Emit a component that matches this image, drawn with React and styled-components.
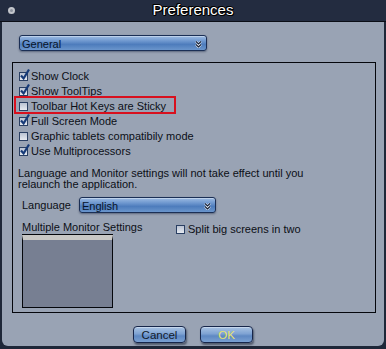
import React from "react";
import styled, { createGlobalStyle } from "styled-components";

const Global = createGlobalStyle`
  html, body { margin: 0; padding: 0; background: #1c2434; }
  body { width: 386px; height: 349px; overflow: hidden; }
  * { box-sizing: border-box; }
`;

const Window = styled.div`
  width: 386px;
  height: 349px;
  display: flex;
  flex-direction: column;
  background: #1e2738;
  padding: 0 2px 3px 2px;
  font-family: "Liberation Sans", Arial, sans-serif;
  font-size: 11px;
  color: #0c0f16;
`;

const TitleBar = styled.div`
  height: 22px;
  flex: none;
  position: relative;
  display: flex;
  align-items: center;
  justify-content: center;
  background: #232c40;
  border-bottom: 1px solid #0b0e16;
  margin: 0 -2px;
`;

const Title = styled.div`
  color: #fff;
  font-family: "Liberation Sans", Arial, sans-serif;
  font-size: 15px;
  line-height: 1;
  margin-top: -2px;
  text-shadow: -1px 0 #000, 1px 0 #000, 0 -1px #000, 0 1px #000, 1px 1px #000, -1px -1px #000;
`;

const CloseDot = styled.span`
  position: absolute;
  left: 8px;
  top: 7px;
  width: 7px;
  height: 7px;
  border-radius: 50%;
  background: #8d939e;
  border: 2px solid #c3c6cc;
`;

const Body = styled.div`
  flex: 1;
  background: #99a3b4;
  border-radius: 0 0 6px 6px;
  display: flex;
  flex-direction: column;
  padding: 13px 9px 0 10px;
`;

const Select = styled.div`
  width: ${(p) => p.$w}px;
  height: 16px;
  border: 1px solid #1b2f55;
  border-radius: 3px;
  background: linear-gradient(#9dbbe2 0%, #6f98cf 35%, #4d7cbc 60%, #6a95cc 100%);
  box-shadow: 0 1px 2px rgba(20, 30, 60, 0.45), inset 0 1px 0 rgba(255,255,255,0.35);
  display: flex;
  align-items: center;
  justify-content: space-between;
  padding: 1px 4px 0 2px;
  font-size: 11px;
  color: #07142a;
  flex: none;
`;

const Chevron = () => (
  <svg width="7" height="8" viewBox="0 0 7 8">
    <path d="M1 1.5 L3.5 4 L6 1.5 M1 4.5 L3.5 7 L6 4.5" fill="none" stroke="#f2f5fa" strokeWidth="2.2" />
    <path d="M1 1.5 L3.5 4 L6 1.5 M1 4.5 L3.5 7 L6 4.5" fill="none" stroke="#0d1a33" strokeWidth="1.1" />
  </svg>
);

const TopSelectWrap = styled.div`
  padding-left: 7px;
`;

const Group = styled.div`
  margin-top: 11px;
  width: 364px;
  height: 251px;
  border: 1px solid #05070c;
  display: flex;
  flex-direction: column;
  padding: 5px 0 0 5px;
`;

const CheckList = styled.div`
  display: flex;
  flex-direction: column;
`;

const Row = styled.label`
  position: relative;
  height: 15px;
  display: flex;
  align-items: center;
  gap: 3px;
  padding-left: 1px;
`;

const Highlight = styled.span`
  position: absolute;
  left: -4px;
  top: -2px;
  width: 162px;
  height: 18px;
  border: 2px solid #d8101e;
  pointer-events: none;
`;

const Box = styled.span`
  position: relative;
  width: 9px;
  height: 9px;
  flex: none;
  border: 1px solid #2a3f63;
  background: linear-gradient(#b9c2d2, #e6eaf1);
  margin-top: 1px;
`;

const Tick = styled.svg`
  position: absolute;
  left: 0px;
  top: -4px;
  overflow: visible;
`;

const Check = ({ checked }) => (
  <Box>
    {checked && (
      <Tick width="10" height="11" viewBox="0 0 10 11">
        <path d="M1 6.5 L3.6 9.5 L9 0.5" fill="none" stroke="#163a78" strokeWidth="2.2" />
      </Tick>
    )}
  </Box>
);

const Note = styled.div`
  margin-top: 10px;
  line-height: 11px;
`;

const LangRow = styled.div`
  margin-top: 7px;
  padding-left: 4px;
  display: flex;
  align-items: center;
  gap: 8px;
`;

const Monitors = styled.div`
  margin-top: 8px;
  padding-left: 4px;
  display: flex;
`;

const MonitorCol = styled.div`
  width: 153px;
  display: flex;
  flex-direction: column;
`;

const MonitorLabel = styled.span`
  line-height: 13px;
`;

const MonitorBox = styled.div`
  width: 91px;
  height: 73px;
  border: 1px solid #05070c;
  background: #777f92;
  border-top: 5px solid #c8c7c5;
  box-shadow: 0 -1px 0 #05070c;
  margin-top: 1px;
`;

const SplitRow = styled(Row)`
  margin-top: 0;
`;

const Buttons = styled.div`
  margin-top: 13px;
  display: flex;
  justify-content: center;
  gap: 14px;
  padding-right: 1px;
`;

const Button = styled.button`
  width: 53px;
  height: 17px;
  border: 1px solid #17264a;
  border-radius: 4px;
  background: linear-gradient(#a9c3e3 0%, #7fa3d3 45%, #5e88c2 60%, #79a0d2 100%);
  box-shadow: 1px 2px 2px rgba(10, 20, 40, 0.5), inset 0 1px 0 rgba(255,255,255,0.35);
  font-family: "Liberation Sans", Arial, sans-serif;
  font-size: 11.5px;
  color: ${(p) => (p.$primary ? "#e8e46e" : "#121a2a")};
  padding: 1px 0 0;
`;

const items = [
  ["Show Clock", true],
  ["Show ToolTips", true],
  ["Toolbar Hot Keys are Sticky", false, true],
  ["Full Screen Mode", true],
  ["Graphic tablets compatibily mode", false],
  ["Use Multiprocessors", true],
];

export default function App() {
  return (
    <>
      <Global />
      <Window>
        <TitleBar>
          <CloseDot />
          <Title>Preferences</Title>
        </TitleBar>
        <Body>
          <TopSelectWrap>
            <Select $w={188}>
              <span>General</span>
              <Chevron />
            </Select>
          </TopSelectWrap>
          <Group>
            <CheckList>
              {items.map(([t, c, hl]) => (
                <Row key={t}>
                  {hl && <Highlight />}
                  <Check checked={c} />
                  <span>{t}</span>
                </Row>
              ))}
            </CheckList>
            <Note>
              Language and Monitor settings will not take effect until you
              <br />
              relaunch the application.
            </Note>
            <LangRow>
              <span>Language</span>
              <Select $w={137}>
                <span>English</span>
                <Chevron />
              </Select>
            </LangRow>
            <Monitors>
              <MonitorCol>
                <MonitorLabel>Multiple Monitor Settings</MonitorLabel>
                <MonitorBox />
              </MonitorCol>
              <SplitRow>
                <Check checked={false} />
                <span>Split big screens in two</span>
              </SplitRow>
            </Monitors>
          </Group>
          <Buttons>
            <Button>Cancel</Button>
            <Button $primary>OK</Button>
          </Buttons>
        </Body>
      </Window>
    </>
  );
}
